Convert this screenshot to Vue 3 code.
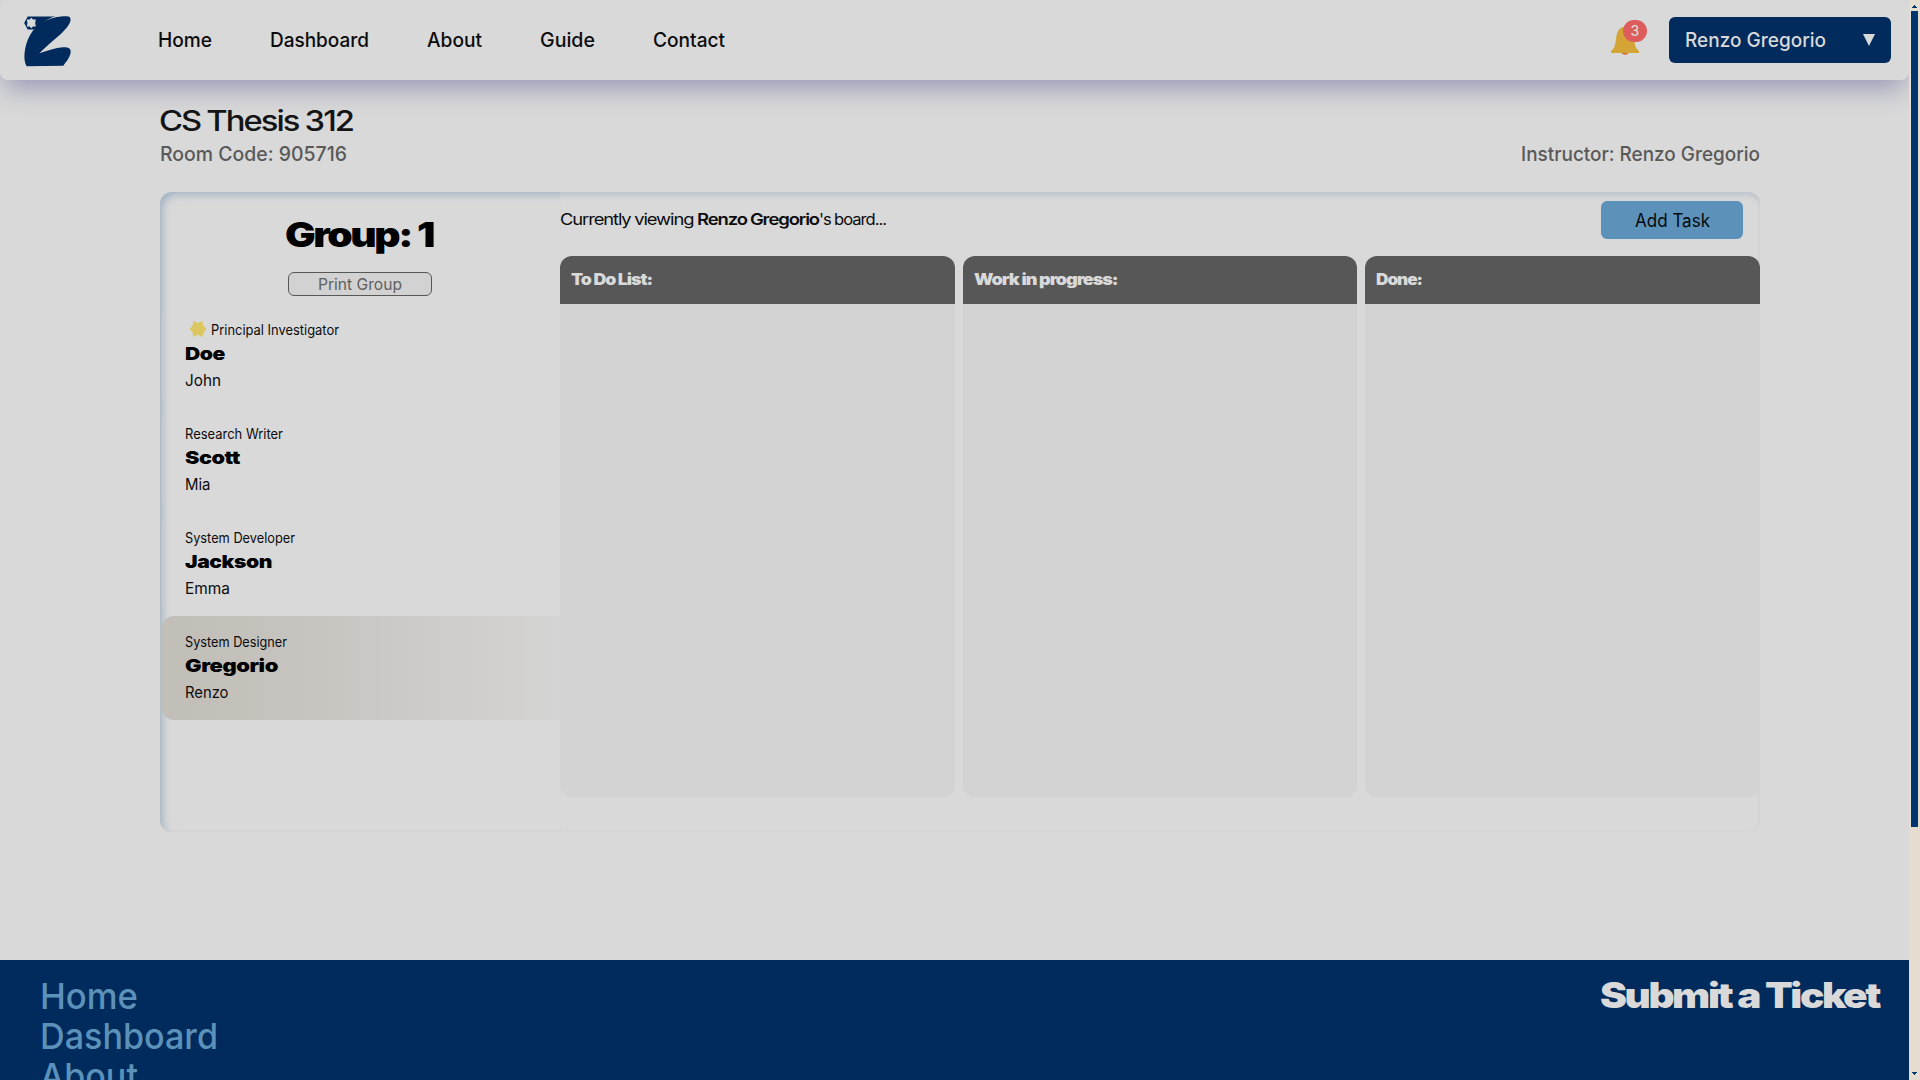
<script setup>
const navLinks = [
  { label: 'Home', width: 54 },
  { label: 'Dashboard', width: 99 },
  { label: 'About', width: 55 },
  { label: 'Guide', width: 55 },
  { label: 'Contact', width: 72 },
]

const members = [
  { role: 'Principal Investigator', roleWidth: 128, last: 'Doe', lastWidth: 40, first: 'John', firstWidth: 36, leader: true },
  { role: 'Research Writer', roleWidth: 98, last: 'Scott', lastWidth: 55, first: 'Mia', firstWidth: 25.5 },
  { role: 'System Developer', roleWidth: 110, last: 'Jackson', lastWidth: 87, first: 'Emma', firstWidth: 45 },
  { role: 'System Designer', roleWidth: 102, last: 'Gregorio', lastWidth: 93, first: 'Renzo', firstWidth: 43.5, active: true },
]

const columns = [
  { title: 'To Do List:', width: 81 },
  { title: 'Work in progress:', width: 143.5 },
  { title: 'Done:', width: 46 },
]

const footerLinks = [
  { label: 'Home', width: 98 },
  { label: 'Dashboard', width: 178 },
  { label: 'About', width: 98 },
]

// Stretches or condenses a label so that it takes the given width.
const vFit = {
  mounted(el, { value }) {
    const natural = el.getBoundingClientRect().width
    el.style.transform = `scaleX(${value / natural})`
    el.style.marginRight = `${value - natural}px`
  },
}
</script>

<template>
  <div class="screen">
    <div class="page">
      <header class="topbar">
        <svg class="logo" viewBox="69 45 150 156">
          <path fill-rule="evenodd" d="M83 49.500H166C143 55 124 69 109 88.500H83L72.500 69ZM94 53L89 58.500H80.500L82.500 69L80.500 79.500H89L94 85L99 79.500H107.500L105.500 69L107.500 58.500H99Z" />
          <path d="M80 198.500C70 183 71 151 84 118C98 82 129 61 162 53C176 50 194 48 205 49.500C213 51 213 60 209 69C197 96 153 124 118 160C143 151 167 144 188 142C203 141 213 145 212 156C211 170 200 184 190 197Z" />
        </svg>
        <nav class="nav">
          <a v-for="link in navLinks" :key="link.label" v-fit="link.width" class="fit">{{ link.label }}</a>
        </nav>
        <div class="bell">
          <svg viewBox="0 0 28 28">
            <path fill="#da6a2a" d="M10 24h8c0 5-8 5-8 0z" />
            <path fill="#d4a535" d="M0 26v-2c4-3 4-6 5-12C6 4 8 0 14 0s8 4 9 12c1 6 1 9 5 12v2z" />
          </svg>
          <span class="badge">3</span>
        </div>
        <button class="user">
          <span v-fit="141" class="fit">Renzo Gregorio</span>
          <svg class="caret" viewBox="0 0 12 12"><path d="M0 0h12L6 12z" /></svg>
        </button>
      </header>

      <main class="content">
        <div class="heading">
          <h1><span v-fit="194" class="fit wide">CS Thesis 312</span></h1>
          <div class="meta">
            <span v-fit="187" class="fit">Room Code: 905716</span>
            <span v-fit="239" class="fit">Instructor: Renzo Gregorio</span>
          </div>
        </div>

        <section class="panel">
          <aside class="group">
            <h2><span v-fit="148" class="fit black">Group: 1</span></h2>
            <button class="print"><span v-fit="84" class="fit">Print Group</span></button>
            <div v-for="m in members" :key="m.last" class="member" :class="{ active: m.active }">
              <div class="role">
                <svg v-if="m.leader" class="star" viewBox="-10 -10 20 20">
                  <path d="M-9.500 0L-6-3.800L-5-9L0-6.500L5-9L6-3.800L9.500 0L6 3.800L5 9L0 6.500L-5 9L-6 3.800Z" />
                </svg>
                <span v-fit="m.roleWidth" class="fit">{{ m.role }}</span>
              </div>
              <div class="last"><span v-fit="m.lastWidth" class="fit name">{{ m.last }}</span></div>
              <div class="first"><span v-fit="m.firstWidth" class="fit">{{ m.first }}</span></div>
            </div>
          </aside>

          <div class="board">
            <div class="toolbar">
              <p><span v-fit="137" class="fit wide">Currently viewing&nbsp;</span><b v-fit="122" class="fit wide">Renzo Gregorio</b><span v-fit="67" class="fit wide">'s board...</span></p>
              <button class="add"><span v-fit="75" class="fit">Add Task</span></button>
            </div>
            <div class="columns">
              <div v-for="c in columns" :key="c.title" class="column">
                <h3><span v-fit="c.width" class="fit black">{{ c.title }}</span></h3>
              </div>
            </div>
          </div>
        </section>
      </main>

      <footer class="footer">
        <div class="links">
          <a v-for="link in footerLinks" :key="link.label"><span v-fit="link.width" class="fit">{{ link.label }}</span></a>
        </div>
        <div class="ticket"><span v-fit="279" class="fit black">Submit a Ticket</span></div>
      </footer>
    </div>

    <div class="scrollbar">
      <svg viewBox="0 0 5 3"><path d="M2 0h1v1h1v1h1v1H0V2h1V1h1z" /></svg>
      <div class="thumb"></div>
      <svg class="down" viewBox="0 0 5 3"><path d="M0 0h5v1H4v1H3v1H2V2H1V1H0z" /></svg>
    </div>
  </div>
</template>

<style>
body {
  margin: 0;
  overflow: hidden;
}
</style>

<style scoped>
.screen {
  display: flex;
  width: 1920px;
  height: 1080px;
  overflow: hidden;
  font-family: Inter, "Liberation Sans", sans-serif;
  color: #0c0c0d;
}

.screen * {
  box-sizing: border-box;
}

h1, h2, h3, p {
  margin: 0;
}

button {
  font-family: inherit;
  padding: 0;
}

.fit {
  display: inline-block;
  white-space: nowrap;
  transform-origin: 0 50%;
}

.wide {
  letter-spacing: -0.06em;
  word-spacing: -0.02em;
}

.black {
  letter-spacing: -0.06em;
  word-spacing: 0.01em;
}

.name {
  letter-spacing: -0.02em;
}

.page {
  display: flex;
  flex-direction: column;
  width: 1909px;
  height: 1080px;
  background: #d9d9d9;
  overflow: hidden;
}

.topbar {
  display: flex;
  flex: none;
  align-items: center;
  height: 80px;
  padding: 0 18px 0 23px;
  border-radius: 8px;
  background: #d9d9d9;
  box-shadow: 0 13px 27px -5px rgba(50, 52, 127, 0.4);
}

.logo {
  width: 50px;
  height: 52px;
  margin-top: 2px;
  fill: #002b5c;
}

.nav {
  display: flex;
  gap: 58px;
  margin-left: 84.5px;
  font-size: 20px;
  font-weight: 500;
  line-height: 24px;
}

.bell {
  position: relative;
  width: 28px;
  height: 28px;
  margin: 2px 30.5px 0 auto;
}

.bell svg {
  display: block;
  width: 28px;
  height: 28px;
}

.badge {
  position: absolute;
  left: 12.5px;
  top: -7px;
  width: 24px;
  height: 22px;
  border-radius: 11px;
  background: #dd5c5c;
  color: #d9d9d9;
  font-size: 14px;
  font-weight: 500;
  line-height: 22px;
  text-align: center;
}

.user {
  display: flex;
  align-items: center;
  width: 222px;
  height: 46px;
  padding: 0 16px;
  border: 0;
  border-radius: 6px;
  background: #002b5c;
  color: #d9d9d9;
  font-size: 20px;
  font-weight: 500;
}

.caret {
  width: 12px;
  height: 12px;
  margin-left: auto;
  fill: #d9d9d9;
}

.content {
  flex: none;
  height: 880px;
  padding: 22px 149px 0 160px;
}

.heading {
  height: 90px;
}

h1 {
  height: 38px;
  margin-left: -1px;
  font-size: 28px;
  font-weight: 500;
  line-height: 38px;
  color: #141415;
}

.meta {
  display: flex;
  justify-content: space-between;
  padding-top: 2px;
  font-size: 20px;
  font-weight: 500;
  line-height: 24px;
  color: #595959;
}

.panel {
  display: flex;
  height: 640px;
  border-radius: 12px;
  overflow: hidden;
  box-shadow: inset 5px 5px 8px -3px rgba(115, 148, 180, 0.6), inset 0 -1px 1px rgba(190, 190, 190, 0.15);
}

.group {
  display: flex;
  flex-direction: column;
  align-items: center;
  width: 400px;
  padding: 23px 0 0 2px;
}

h2 {
  height: 40px;
  margin-left: -4px;
  font-size: 34px;
  font-weight: 900;
  line-height: 40px;
  color: #000;
}

.print {
  width: 144px;
  height: 24px;
  margin: 17px 0 8px -2px;
  border: 1px solid #575757;
  border-radius: 6px;
  background: #d2d2d2;
  color: #606060;
  font-size: 16px;
  line-height: 22px;
}

.member {
  width: 100%;
  height: 104px;
  padding: 16px 0 0 22px;
  border-left: 1px solid rgba(200, 206, 210, 0.6);
  border-radius: 12px 0 0 12px;
}

.member.active {
  border-left-color: transparent;
  background: linear-gradient(90deg, #c1bdb7, #c8c6c1 45%, #d4d4d4) border-box;
}

.role {
  display: flex;
  align-items: center;
  height: 18px;
  font-size: 14px;
}

.star {
  width: 18px;
  height: 18px;
  margin: 0 4px 0 4px;
  fill: #dbc660;
}

.last {
  height: 26px;
  margin-top: 3px;
  font-size: 18px;
  font-weight: 900;
  line-height: 26px;
  color: #000;
}

.first {
  height: 26px;
  font-size: 16px;
  line-height: 27px;
}

.board {
  width: 1200px;
  border-radius: 0 12px 12px 0;
  background: #d9d9d9;
  box-shadow: inset -1px 7px 7px -5px rgba(120, 150, 180, 0.4), inset -1px -1px 1px rgba(190, 190, 190, 0.1);
}

.toolbar {
  display: flex;
  justify-content: space-between;
  height: 64px;
  padding: 9px 17px 0 0;
}

.toolbar p {
  height: 38px;
  margin-left: -0.5px;
  font-size: 16px;
  line-height: 37px;
}

.toolbar b {
  font-weight: 600;
}

.add {
  width: 142px;
  height: 38px;
  border: 0;
  border-radius: 6px;
  background: #5c92b9;
  color: #05090c;
  font-size: 18px;
  line-height: 40px;
}

.columns {
  display: flex;
  gap: 8px;
  height: 541px;
}

.column {
  flex: 1;
  border-radius: 12px;
  background: #d3d3d3;
  overflow: hidden;
}

h3 {
  height: 48px;
  padding-left: 11px;
  background: #575757;
  color: #d9d9d9;
  font-size: 16px;
  font-weight: 900;
  line-height: 47px;
}

.footer {
  display: flex;
  flex: none;
  justify-content: space-between;
  height: 120px;
  padding: 16px 30.5px 0 40px;
  background: #002b5c;
  overflow: hidden;
}

.links {
  color: #5c92b9;
  font-size: 36px;
  font-weight: 500;
}

.links a {
  display: block;
  height: 40px;
  line-height: 41px;
}

.ticket {
  color: #d9d9d9;
  font-size: 35px;
  font-weight: 900;
  line-height: 38px;
}

.scrollbar {
  display: flex;
  flex-direction: column;
  align-items: center;
  width: 11px;
  height: 1080px;
  padding: 5px 0;
  background: #e5ddd0;
}

.scrollbar svg {
  width: 5px;
  height: 3px;
  fill: #00356f;
}

.thumb {
  width: 7px;
  height: 816px;
  margin-top: 3px;
  background: #00356f;
}

.down {
  margin-top: auto;
}
</style>
